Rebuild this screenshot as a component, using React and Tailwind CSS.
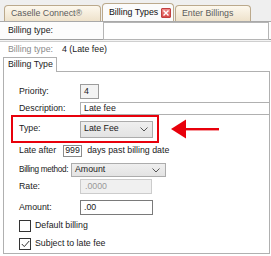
import React from "react";

const font = { fontFamily: '"Liberation Sans", Arial, sans-serif' };

const Chevron = () => (
  <svg width="8" height="5" viewBox="0 0 8 5" className="shrink-0">
    <path d="M0.5 0.5 L4 4 L7.5 0.5" fill="none" stroke="#555" strokeWidth="1" />
  </svg>
);

const Tab = ({ label, active, children, width }) => (
  <div
    className={`flex items-center rounded-t-[4px] border border-b-0 border-[#bba98c] pl-[6px] pr-[2px] ${width} ${
      active
        ? "h-[18px] bg-[#fbfbfb] text-[#111]"
        : "h-[16px] bg-gradient-to-b from-[#fdf8ee] to-[#eee2cb] text-[#5c5c5c]"
    }`}
  >
    <span className="flex-1 whitespace-nowrap">{label}</span>
    {children}
  </div>
);

const Row = ({ label, className, children }) => (
  <div className={`flex items-center pl-[15px] ${className}`}>
    <span className="w-[61px] shrink-0 whitespace-nowrap">{label}</span>
    {children}
  </div>
);

export default function App() {
  return (
    <div
      className="w-[271px] h-[256px] overflow-hidden bg-white text-[8.8px] text-[#1b1b1b]"
      style={font}
    >
      {/* TAB STRIP */}
      <div className="flex items-end gap-[1px] h-[21px] pl-[4px] bg-[#efefef]">
        <Tab label="Caselle Connect®" width="w-[97px]" />
        <Tab label="Billing Types" active width="w-[72px]">
          <div className="w-[10px] h-[10px] rounded-[1px] bg-gradient-to-b from-[#f08a8a] to-[#d84848] border border-[#c04040] flex items-center justify-center">
            <svg width="6" height="6" viewBox="0 0 6 6">
              <path d="M0.5 0.5 L5.5 5.5 M5.5 0.5 L0.5 5.5" stroke="#fff" strokeWidth="1.4" />
            </svg>
          </div>
        </Tab>
        <Tab label="Enter Billings" width="w-[76px]" />
      </div>

      {/* SEARCH ROW */}
      <div className="border-t border-[#a9a9a9] bg-[#fcfcfc] flex items-center h-[18px] pl-[8px] pr-[2px]">
        <span className="w-[95px] shrink-0">Billing type:</span>
        <div className="flex-1 h-[18px] border border-[#b5b5b5] bg-white" />
      </div>
      <div className="border-t border-[#9e9e9e] h-[2px] bg-[#f4f4f4]" />
      <div className="border-t border-[#cfcfcf]" />

      {/* HEADER */}
      <div className="flex items-center h-[15px] pl-[8px]">
        <span className="w-[54px] text-[#8a8a8a]">Billing type:</span>
        <span>4 (Late fee)</span>
      </div>

      {/* SUB TAB */}
      <div className="ml-[3px] flex">
        <div className="relative z-10 -mb-px w-[54px] h-[15px] border border-b-0 border-[#b0b0b0] bg-white flex items-center pl-[4px] whitespace-nowrap">
          Billing Type
        </div>
      </div>

      {/* PANEL */}
      <div className="ml-[3px] w-[267px] h-[183px] border border-[#b0b0b0] bg-white flex flex-col">
        <Row label="Priority:" className="mt-[12px] h-[15px]">
          <div className="w-[19px] h-[15px] border border-[#9c9c9c] bg-[#f3f3f3] flex items-center pl-[3px]">4</div>
        </Row>
        <Row label="Description:" className="mt-[3px] h-[13px]">
          <div className="flex-1 h-[13px] border border-[#b0b0b0] border-r-0 bg-white flex items-center pl-[3px]">Late fee</div>
        </Row>

        <div className="flex items-center">
          <div className="ml-[7px] w-[148px] h-[28px] border-2 border-[#e8000b] flex items-center pl-[6px]">
            <span className="w-[61px] shrink-0">Type:</span>
            <div className="w-[73px] h-[17px] border border-[#acacac] bg-gradient-to-b from-[#efefef] to-[#e3e3e3] flex items-center justify-between pl-[3px] pr-[4px]">
              <span>Late Fee</span>
              <Chevron />
            </div>
          </div>
          <svg width="48" height="22" viewBox="0 0 48 22" className="ml-[12px]">
            <path d="M0 11 L15 1.5 L15 20.5 Z" fill="#e8000b" />
            <rect x="14" y="10" width="34" height="2.4" fill="#e8000b" />
          </svg>
        </div>

        <div className="flex items-center pl-[15px] mt-[2px] h-[12px]">
          <span className="whitespace-nowrap">Late after</span>
          <div className="ml-[7px] w-[19px] h-[12px] border border-[#8c8c8c] bg-white flex items-center pl-[1px]">999</div>
          <span className="ml-[5px] whitespace-nowrap">days past billing date</span>
        </div>

        <div className="flex items-center pl-[15px] mt-[6px] h-[14px]">
          <span className="w-[52px] shrink-0 whitespace-nowrap text-[8.2px] tracking-[-0.3px]">Billing method:</span>
          <div className="w-[95px] h-[14px] border border-[#acacac] bg-gradient-to-b from-[#efefef] to-[#e3e3e3] flex items-center justify-between pl-[3px] pr-[5px]">
            <span>Amount</span>
            <Chevron />
          </div>
        </div>

        <Row label="Rate:" className="mt-[2px] h-[15px]">
          <div className="w-[72px] h-[15px] border border-[#cccccc] bg-[#f0f0f0] text-[#9a9a9a] flex items-center pl-[4px]">.0000</div>
        </Row>
        <Row label="Amount:" className="mt-[6px] h-[15px]">
          <div className="w-[73px] h-[15px] border border-[#7a7a7a] bg-white flex items-center pl-[3px]">.00</div>
        </Row>

        <div className="flex items-center pl-[15px] mt-[5px] h-[12px]">
          <div className="w-[12px] h-[12px] border border-[#333] bg-white" />
          <span className="ml-[4px]">Default billing</span>
        </div>
        <div className="flex items-center pl-[15px] mt-[6px] h-[12px]">
          <div className="w-[12px] h-[12px] border border-[#333] bg-white flex items-center justify-center">
            <svg width="9" height="8" viewBox="0 0 9 8">
              <path d="M0.8 4 L3.3 6.6 L8.2 1" fill="none" stroke="#333" strokeWidth="1" />
            </svg>
          </div>
          <span className="ml-[4px]">Subject to late fee</span>
        </div>
      </div>
    </div>
  );
}
